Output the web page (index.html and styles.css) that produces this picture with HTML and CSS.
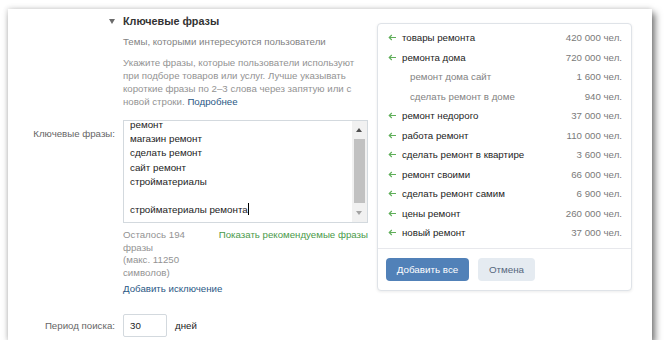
FILE: index.html
```html
<!DOCTYPE html>
<html lang="ru">
<head>
<meta charset="utf-8">
<link rel="stylesheet" href="styles.css">
</head>
<body>
<div class="window">
  <div class="section-head">
    <span class="caret"></span>
    <div class="head-text">
      <div class="title">Ключевые фразы</div>
      <div class="subtitle">Темы, которыми интересуются пользователи</div>
      <p class="hint"><span>Укажите фразы, которые пользователи используют при подборе товаров или услуг. Лучше указывать короткие фразы по 2–3 слова через запятую или с новой строки.</span> <a class="link">Подробнее</a></p>
    </div>
  </div>

  <div class="row row-phrases">
    <div class="label">Ключевые фразы:</div>
    <div class="field">
      <div class="textarea">
        <div class="ta-text">
          <div>ремонт</div>
          <div>магазин ремонт</div>
          <div>сделать ремонт</div>
          <div>сайт ремонт</div>
          <div>стройматериалы</div>
          <div>&nbsp;</div>
          <div>стройматериалы ремонта<span class="caret-line"></span></div>
        </div>
        <div class="scrollbar">
          <div class="sb-btn sb-up"></div>
          <div class="sb-track"><div class="sb-thumb"></div></div>
          <div class="sb-btn sb-down"></div>
        </div>
      </div>
      <div class="under">
        <div class="counter">Осталось 194<br>фразы<br>(макс. 11250<br>символов)</div>
        <a class="green-link">Показать рекомендуемые фразы</a>
      </div>
      <a class="link add-ex">Добавить исключение</a>
    </div>
  </div>

  <div class="row row-period">
    <div class="label">Период поиска:</div>
    <div class="field period">
      <div class="input">30</div>
      <span class="unit">дней</span>
    </div>
  </div>

  <div class="popup">
    <ul class="suggest">
      <li><span class="arr"><svg width="8" height="7" viewBox="0 0 8 7"><path d="M8 3.5H1.2M3.8 1L1.2 3.5L3.8 6" fill="none" stroke="#5fae59" stroke-width="1.1"/></svg></span><span class="name">товары ремонта</span><span class="val">420 000 чел.</span></li>
      <li><span class="arr"><svg width="8" height="7" viewBox="0 0 8 7"><path d="M8 3.5H1.2M3.8 1L1.2 3.5L3.8 6" fill="none" stroke="#5fae59" stroke-width="1.1"/></svg></span><span class="name">ремонта дома</span><span class="val">720 000 чел.</span></li>
      <li class="sub"><span class="name">ремонт дома сайт</span><span class="val">1 600 чел.</span></li>
      <li class="sub"><span class="name">сделать ремонт в доме</span><span class="val">940 чел.</span></li>
      <li><span class="arr"><svg width="8" height="7" viewBox="0 0 8 7"><path d="M8 3.5H1.2M3.8 1L1.2 3.5L3.8 6" fill="none" stroke="#5fae59" stroke-width="1.1"/></svg></span><span class="name">ремонт недорого</span><span class="val">37 000 чел.</span></li>
      <li><span class="arr"><svg width="8" height="7" viewBox="0 0 8 7"><path d="M8 3.5H1.2M3.8 1L1.2 3.5L3.8 6" fill="none" stroke="#5fae59" stroke-width="1.1"/></svg></span><span class="name">работа ремонт</span><span class="val">110 000 чел.</span></li>
      <li><span class="arr"><svg width="8" height="7" viewBox="0 0 8 7"><path d="M8 3.5H1.2M3.8 1L1.2 3.5L3.8 6" fill="none" stroke="#5fae59" stroke-width="1.1"/></svg></span><span class="name">сделать ремонт в квартире</span><span class="val">3 600 чел.</span></li>
      <li><span class="arr"><svg width="8" height="7" viewBox="0 0 8 7"><path d="M8 3.5H1.2M3.8 1L1.2 3.5L3.8 6" fill="none" stroke="#5fae59" stroke-width="1.1"/></svg></span><span class="name">ремонт своими</span><span class="val">66 000 чел.</span></li>
      <li><span class="arr"><svg width="8" height="7" viewBox="0 0 8 7"><path d="M8 3.5H1.2M3.8 1L1.2 3.5L3.8 6" fill="none" stroke="#5fae59" stroke-width="1.1"/></svg></span><span class="name">сделать ремонт самим</span><span class="val">6 900 чел.</span></li>
      <li><span class="arr"><svg width="8" height="7" viewBox="0 0 8 7"><path d="M8 3.5H1.2M3.8 1L1.2 3.5L3.8 6" fill="none" stroke="#5fae59" stroke-width="1.1"/></svg></span><span class="name">цены ремонт</span><span class="val">260 000 чел.</span></li>
      <li><span class="arr"><svg width="8" height="7" viewBox="0 0 8 7"><path d="M8 3.5H1.2M3.8 1L1.2 3.5L3.8 6" fill="none" stroke="#5fae59" stroke-width="1.1"/></svg></span><span class="name">новый ремонт</span><span class="val">37 000 чел.</span></li>
    </ul>
    <div class="popup-actions">
      <button class="btn btn-primary">Добавить все</button>
      <button class="btn btn-secondary">Отмена</button>
    </div>
  </div>
</div>
</body>
</html>
```
FILE: styles.css
```css
* { box-sizing: border-box; }
html, body { margin: 0; padding: 0; background: #fff; }
body {
  font-family: "Liberation Sans", Arial, sans-serif;
  font-size: 9.7px;
  color: #222;
}
.window {
  position: relative;
  margin: 9px 0 0 8px;
  width: 644px;
  height: 331px;
  background: #fff;
  box-shadow: 3px 4px 7px rgba(0,0,0,0.55), -1px -1px 5px rgba(0,0,0,0.12);
}
.section-head {
  display: flex;
  padding: 6px 0 0 101px;
}
.caret {
  width: 14px;
  height: 13px;
  position: relative;
}
.caret::before {
  content: "";
  position: absolute;
  left: 0;
  top: 4px;
  border-left: 3px solid transparent;
  border-right: 3px solid transparent;
  border-top: 5px solid #6b6b6b;
}
.head-text { width: 245px; }
.title {
  font-size: 10.8px;
  font-weight: bold;
  color: #333;
  line-height: 13px;
}
.subtitle {
  color: #828282;
  line-height: 13px;
  margin-top: 6.5px;
}
.hint {
  margin: 8px 0 0;
  color: #939393;
  line-height: 13px;
}
.link { color: #2a5885; text-decoration: none; }

.row {
  display: grid;
  grid-template-columns: 107px 245px;
  column-gap: 8px;
}
.label {
  text-align: right;
  color: #666;
}
.row-phrases { margin-top: 12.5px; }
.row-phrases .label { padding-top: 8px; }

.textarea {
  height: 103px;
  border: 1px solid #d3d9de;
  overflow: hidden;
  display: flex;
}
.ta-text {
  flex: 1;
  padding-left: 6px;
  margin-top: -3px;
  font-size: 9.8px;
  line-height: 14.2px;
  color: #222;
}
.caret-line {
  display: inline-block;
  width: 1px;
  height: 12px;
  background: #000;
  vertical-align: -2px;
}
.scrollbar {
  width: 15px;
  display: flex;
  flex-direction: column;
  background: #f1f1f1;
}
.sb-btn { height: 17px; position: relative; }
.sb-up::after, .sb-down::after {
  content: "";
  position: absolute;
  left: 4px;
  border-left: 3.5px solid transparent;
  border-right: 3.5px solid transparent;
}
.sb-up::after { top: 7px; border-bottom: 4px solid #505050; }
.sb-down::after { top: 6px; border-top: 4px solid #a3a3a3; }
.sb-track { flex: 1; padding: 1px 2px 0; }
.sb-thumb { height: 64px; background: #c1c1c1; }

.under {
  display: flex;
  justify-content: space-between;
  margin-top: 6px;
}
.counter {
  color: #939393;
  line-height: 12.6px;
}
.green-link { color: #4a9a4a; line-height: 12.5px; white-space: nowrap; }
.add-ex { display: block; margin-top: 3px; line-height: 13px; }

.row-period { margin-top: 19px; align-items: center; }
.period { display: flex; align-items: center; }
.input {
  width: 44px;
  height: 23px;
  border: 1px solid #d3d9de;
  border-radius: 2px;
  padding: 5px 0 0 6px;
  line-height: 12px;
  color: #222;
}
.unit { margin-left: 8px; color: #222; }

.popup {
  position: absolute;
  left: 369px;
  top: 14px;
  width: 255px;
  height: 268px;
  border: 1px solid #dfe3e8;
  border-radius: 4px;
  background: #fff;
  box-shadow: 0 1px 3px rgba(0,0,0,0.08);
}
.suggest {
  list-style: none;
  margin: 0;
  padding: 4px 9px 5px 10px;
  border-bottom: 1px solid #e7e8ec;
}
.suggest li {
  display: flex;
  align-items: center;
  height: 19.5px;
  color: #222;
}
.arr { width: 14px; display: flex; align-items: center; }
.suggest li.sub .name { padding-left: 22px; color: #828282; }
.name { flex: 1; }
.val { color: #7a7a7a; }
.popup-actions {
  display: flex;
  gap: 9px;
  padding: 9px 8px;
}
.btn {
  font-family: inherit;
  font-size: 9.8px;
  height: 23px;
  border: 0;
  border-radius: 4px;
  padding: 0;
}
.btn-primary { width: 83px; background: #5181b8; color: #fff; }
.btn-secondary { width: 57px; background: #e5ebf1; color: #55677d; }
```
